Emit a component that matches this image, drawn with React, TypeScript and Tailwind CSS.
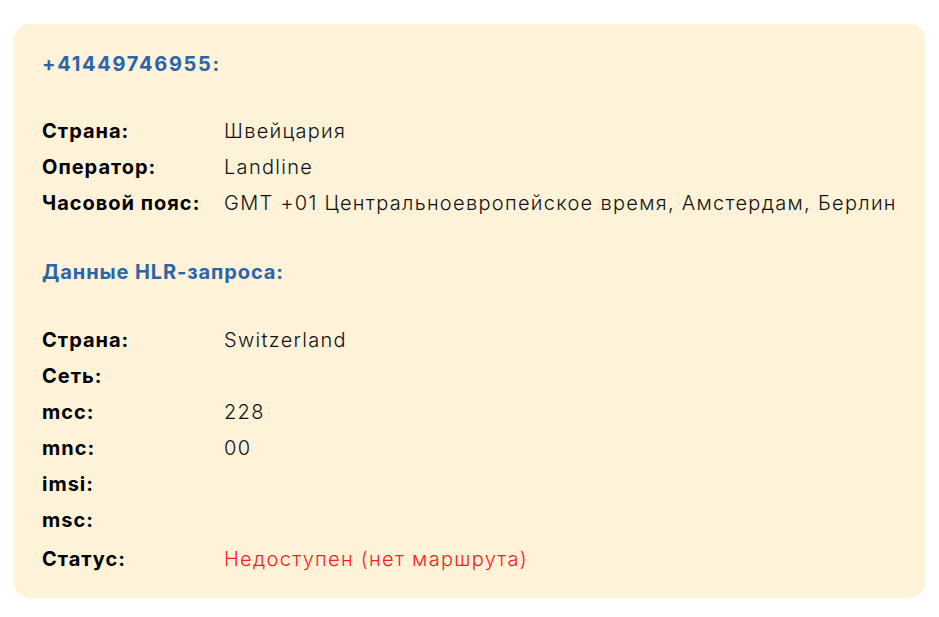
import React from "react";

const Row = ({ label, value, red }: { label: string; value?: string; red?: boolean }) => (
  <div className="grid grid-cols-[183px_1fr] h-[36px] items-center">
    <div className="font-bold text-black tracking-[1px]">{label}</div>
    <div className={red ? "font-light text-[#ff1a1a] tracking-[1.3px] -ml-px" : "font-light text-[#111] tracking-[1.3px] -ml-px"}>{value}</div>
  </div>
);

export default function App() {
  return (
    <div className="bg-white w-[939px] h-[617px] pt-[24px] px-[14px]" style={{ fontFamily: 'Inter, "Noto Sans", sans-serif' }}>
      <div className="bg-[#fef3d8] rounded-[16px] h-[574px] pl-[28px] pr-[20px] pt-[22px] text-[20px]">
        <div className="h-[36px] flex items-center font-bold text-[#2b65a9] tracking-[1.7px]">+41449746955:</div>
        <div className="mt-[31px]">
          <Row label="Страна:" value="Швейцария" />
          <Row label="Оператор:" value="Landline" />
          <Row label="Часовой пояс:" value="GMT +01 Центральноевропейское время, Амстердам, Берлин" />
        </div>
        <div className="mt-[33px] h-[36px] flex items-center font-bold text-[#2b65a9] tracking-[0.9px]">Данные HLR-запроса:</div>
        <div className="mt-[32px]">
          <Row label="Страна:" value="Switzerland" />
          <Row label="Сеть:" />
          <Row label="mcc:" value="228" />
          <Row label="mnc:" value="00" />
          <Row label="imsi:" />
          <Row label="msc:" />
          <div className="mt-[3px]">
            <Row label="Статус:" value="Недоступен (нет маршрута)" red />
          </div>
        </div>
      </div>
    </div>
  );
}
